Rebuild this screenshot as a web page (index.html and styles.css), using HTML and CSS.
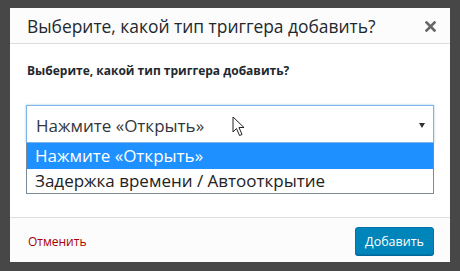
FILE: index.html
```html
<!DOCTYPE html>
<html>
<head>
<meta charset="utf-8">
<link rel="stylesheet" href="styles.css">
</head>
<body>
<div class="dialog">
  <div class="header">
    <h1 class="title">Выберите, какой тип триггера добавить?</h1>
    <span class="close">
      <svg width="11" height="11" viewBox="0 0 11 11"><path d="M1.5 1.5 L9.5 9.5 M9.5 1.5 L1.5 9.5" stroke="#666" stroke-width="2.6" stroke-linecap="square"/></svg>
    </span>
  </div>
  <div class="body">
    <label class="label">Выберите, какой тип триггера добавить?</label>
    <div class="select-wrap">
      <div class="select">
        <span class="select-value">Нажмите «Открыть»</span>
        <span class="arrow"></span>
        <svg class="cursor" width="14" height="22" viewBox="0 0 14 22"><path d="M1 1 L1 16 L4.5 12.5 L7.5 19.5 L10 18.5 L7 11.5 L12 11.5 Z" fill="#fff" stroke="#222" stroke-width="1"/></svg>
      </div>
      <div class="dropdown">
        <div class="option selected">Нажмите «Открыть»</div>
        <div class="option">Задержка времени / Автооткрытие</div>
      </div>
    </div>
  </div>
  <div class="footer">
    <a class="cancel">Отменить</a>
    <button class="btn">Добавить</button>
  </div>
</div>
</body>
</html>
```
FILE: styles.css
```css
html, body {
  margin: 0;
  padding: 0;
}
body {
  background: #474747;
  width: 460px;
  height: 271px;
  padding: 8px 10px;
  box-sizing: border-box;
  font-family: "Open Sans", "Noto Sans", sans-serif;
}
.dialog {
  width: 440px;
  height: 254px;
  background: #fff;
  display: flex;
  flex-direction: column;
}
.header {
  height: 35px;
  background: #fcfcfc;
  border-bottom: 1px solid #dddddd;
  display: flex;
  align-items: center;
  justify-content: space-between;
  padding: 0 14px 0 17px;
}
.title {
  margin: 0;
  font-size: 17.4px;
  font-weight: 400;
  color: #23282d;
}
.close {
  display: flex;
  margin-top: 1px;
}
.body {
  flex: 1;
  padding: 0 16px 0 16px;
}
.label {
  display: block;
  margin-top: 18px;
  margin-left: 1px;
  font-size: 12px;
  font-weight: 700;
  color: #23282d;
}
.select-wrap {
  position: relative;
  margin-top: 26px;
}
.select {
  height: 38px;
  box-sizing: border-box;
  border: 1px solid #7eb4ea;
  box-shadow: 0 0 2px rgba(30, 140, 190, .5);
  display: flex;
  align-items: center;
  padding: 0 0 0 9px;
  position: relative;
}
.select-value {
  font-size: 17px;
  color: #32373c;
  margin-top: 2px;
}
.arrow {
  position: absolute;
  right: 8px;
  top: 17px;
  width: 0;
  height: 0;
  border-left: 3px solid transparent;
  border-right: 3px solid transparent;
  border-top: 5px solid #333;
}
.cursor {
  position: absolute;
  left: 205px;
  top: 10px;
}
.dropdown {
  position: absolute;
  left: 0;
  right: 0;
  top: 38px;
  background: #fff;
  border: 1px solid #7a8a99;
  border-top: none;
}
.option {
  height: 24px;
  line-height: 24px;
  padding-left: 8px;
  font-size: 17px;
  color: #222;
}
.option.selected {
  background: #1e90ff;
  color: #fff;
  height: 26px;
  line-height: 26px;
}
.footer {
  height: 44px;
  background: #fcfcfc;
  border-top: 1px solid #dddddd;
  display: flex;
  align-items: center;
  justify-content: space-between;
  padding: 0 16px 0 18px;
}
.cancel {
  color: #a00;
  font-size: 12px;
  margin-top: 2px;
}
.btn {
  height: 28px;
  width: 79px;
  padding: 0;
  background: #0085ba;
  border: 1px solid #0073aa;
  border-radius: 3px;
  color: #fff;
  font-family: "Open Sans", "Noto Sans", sans-serif;
  font-size: 12.5px;
  box-shadow: 0 1px 0 #006799;
  margin-top: 2px;
}
```
